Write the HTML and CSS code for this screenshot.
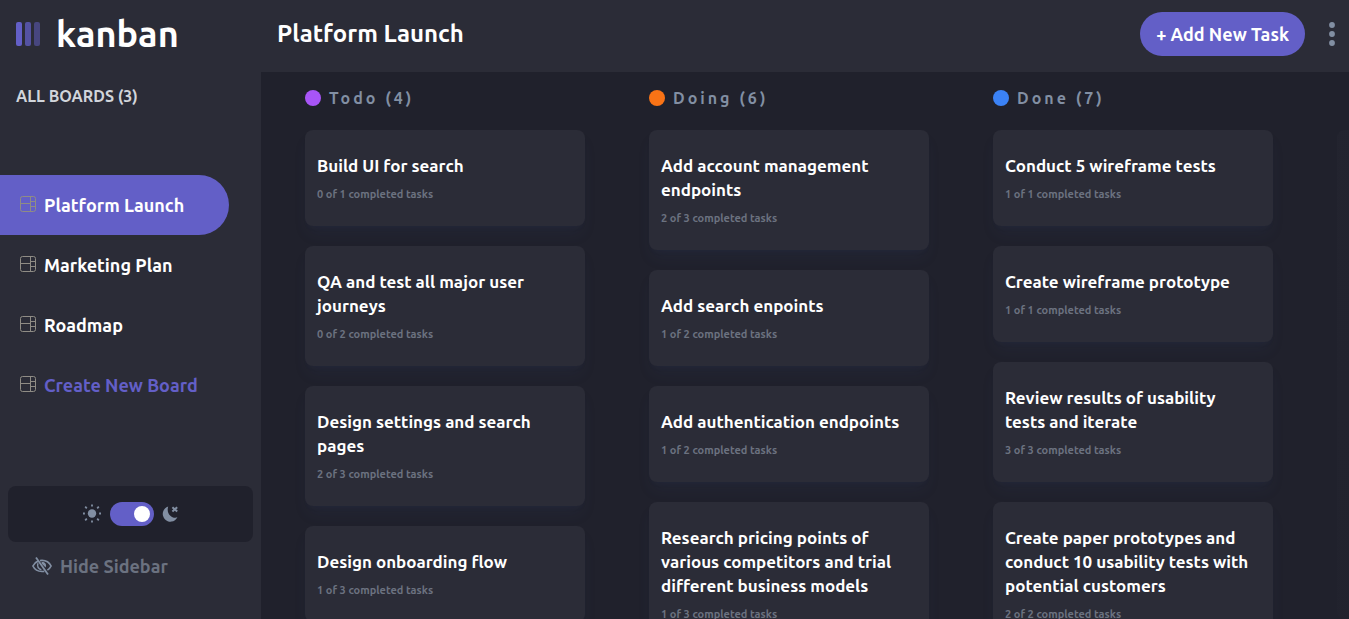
FILE: index.html
```html
<!DOCTYPE html>
<html lang="en">
<head>
<meta charset="utf-8">
<meta name="viewport" content="width=device-width, initial-scale=1">
<title>kanban</title>
<link rel="stylesheet" href="styles.css">
</head>
<body>
<svg class="sprite" aria-hidden="true">
  <symbol id="board" viewBox="0 0 16 16">
    <rect x="0.5" y="0.5" width="15" height="15" rx="2"/>
    <path d="M10.500 .5v15M.5 7.500h10M10.500 5.500h5M10.500 10.500h5"/>
  </symbol>
</svg>
<div class="app">
  <aside class="sidebar">
    <div class="logo">
      <svg class="logo-mark" width="24" height="24" viewBox="0 0 24 24" fill="#635fc7" aria-hidden="true">
        <rect width="6" height="24" rx="2"/>
        <rect x="9" width="6" height="24" rx="2" opacity=".75"/>
        <rect x="18" width="6" height="24" rx="2" opacity=".5"/>
      </svg>
      <span class="logo-name">kanban</span>
    </div>
    <h2 class="boards-title">ALL BOARDS (3)</h2>
    <nav class="boards">
      <button class="board active"><svg class="board-icon"><use href="#board"/></svg>Platform Launch</button>
      <button class="board"><svg class="board-icon"><use href="#board"/></svg>Marketing Plan</button>
      <button class="board"><svg class="board-icon"><use href="#board"/></svg>Roadmap</button>
      <button class="board create"><svg class="board-icon"><use href="#board"/></svg>Create New Board</button>
    </nav>
    <div class="sidebar-foot">
      <div class="theme">
        <svg width="20" height="20" viewBox="0 0 20 20" aria-hidden="true">
          <circle cx="10" cy="9.500" r="4.200" fill="#828fa3"/>
          <path d="M10 .5v1.900M10 16.600v1.900M1 9.500h1.900M17.100 9.500H19M3.200 2.700l1.600 1.600M15.200 14.700l1.600 1.600M16.800 2.700l-1.600 1.600M4.800 14.700l-1.600 1.600" stroke="#828fa3" stroke-width="1.800"/>
        </svg>
        <input class="switch" type="checkbox" role="switch" aria-label="Dark mode" checked>
        <svg width="18" height="16" viewBox="0 0 18 16" aria-hidden="true">
          <path d="M6.200 .6A7.700 7.700 0 1 0 15.400 11.300C10.500 13.200 3.800 8 6.200 .6z" fill="#828fa3"/>
          <path d="M10.400 1.200l4.800 4.300M15.200 1.200l-4.800 4.300" stroke="#828fa3" stroke-width="2"/>
        </svg>
      </div>
      <button class="hide">
        <svg width="20" height="18" viewBox="0 0 20 18" fill="none" stroke="#828fa3" aria-hidden="true">
          <path d="M6 4.100C3.800 5 2 6.700 .9 9c1.700 3.500 5.100 5.500 9.100 5.500.8 0 1.600-.1 2.300-.2M8 3.600c.6-.1 1.300-.2 2-.2 4 0 7.400 2.100 9.100 5.600-.8 1.700-2.100 3.100-3.700 4.100" stroke-width="1.700"/>
          <path d="M4 .6l12 16.800" stroke-width="1.800"/>
          <path d="M6 6.200c-1.300 3 .4 6 3.400 6.500" stroke-width="1.500"/>
          <path d="M9.500 5.200c3.500-.7 5.400 2.300 4.200 5.200L9.800 6.800z" fill="#828fa3" stroke="none"/>
        </svg>
        Hide Sidebar
      </button>
    </div>
  </aside>
  <div class="main">
    <header class="header">
      <h1 class="title">Platform Launch</h1>
      <button class="add">+ Add New Task</button>
      <button class="more" aria-label="Board menu">
        <svg width="6" height="24" viewBox="0 0 6 24" fill="#828fa3"><circle cx="3" cy="3" r="2.900"/><circle cx="3" cy="12" r="2.900"/><circle cx="3" cy="21" r="2.900"/></svg>
      </button>
    </header>
    <main class="columns">
      <section class="column">
        <h2 class="column-title todo">Todo (4)</h2>
        <article class="card"><h3>Build UI for search</h3><p>0 of 1 completed tasks</p></article>
        <article class="card"><h3>QA and test all major user journeys</h3><p>0 of 2 completed tasks</p></article>
        <article class="card"><h3>Design settings and search pages</h3><p>2 of 3 completed tasks</p></article>
        <article class="card"><h3>Design onboarding flow</h3><p>1 of 3 completed tasks</p></article>
      </section>
      <section class="column">
        <h2 class="column-title doing">Doing (6)</h2>
        <article class="card"><h3>Add account management endpoints</h3><p>2 of 3 completed tasks</p></article>
        <article class="card"><h3>Add search enpoints</h3><p>1 of 2 completed tasks</p></article>
        <article class="card"><h3>Add authentication endpoints</h3><p>1 of 2 completed tasks</p></article>
        <article class="card"><h3>Research pricing points of various competitors and trial different business models</h3><p>1 of 3 completed tasks</p></article>
      </section>
      <section class="column">
        <h2 class="column-title done">Done (7)</h2>
        <article class="card"><h3>Conduct 5 wireframe tests</h3><p>1 of 1 completed tasks</p></article>
        <article class="card"><h3>Create wireframe prototype</h3><p>1 of 1 completed tasks</p></article>
        <article class="card"><h3>Review results of usability tests and iterate</h3><p>3 of 3 completed tasks</p></article>
        <article class="card"><h3>Create paper prototypes and conduct 10 usability tests with potential customers</h3><p>2 of 2 completed tasks</p></article>
      </section>
      <button class="new-column" aria-label="New column"></button>
    </main>
  </div>
</div>
</body>
</html>
```
FILE: styles.css
```css
* { box-sizing: border-box; margin: 0; }

body {
  background: #20212c;
  color: #fff;
  font-family: Ubuntu, "Noto Sans", "Open Sans", sans-serif;
  font-size: 16px;
  font-weight: 700;
  line-height: 24px;
}

button {
  border: 0;
  padding: 0;
  background: none;
  color: inherit;
  font: inherit;
  cursor: pointer;
}

.sprite { display: none; }

.app { display: flex; height: 100vh; overflow: hidden; }

.sidebar {
  flex: 0 0 261px;
  display: flex;
  flex-direction: column;
  background: #2b2c37;
}

.logo { display: flex; align-items: center; gap: 16px; height: 68px; padding: 0 16px; }
.logo-name { font-size: 36px; line-height: 40px; }

.boards-title {
  margin-top: 16px;
  padding: 0 16px;
  color: #d1d5db;
  font-size: 16px;
}

.boards { display: flex; flex-direction: column; margin-top: 67px; padding-right: 32px; }

.board {
  display: flex;
  align-items: center;
  gap: 8px;
  height: 60px;
  padding-left: 20px;
  border-radius: 0 30px 30px 0;
  font-size: 18px;
}
.board.active { background: #635fc7; }
.board.create { color: #635fc7; }
.board-icon { width: 16px; height: 16px; margin-bottom: 2px; fill: none; stroke: #8f8c85; }

.sidebar-foot { margin-top: auto; padding: 0 8px 41px; }

.theme {
  display: flex;
  align-items: center;
  justify-content: center;
  gap: 8px;
  height: 56px;
  border-radius: 8px;
  background: #20212c;
}

.switch {
  appearance: none;
  width: 44px;
  height: 24px;
  margin: 0;
  padding: 4px;
  border-radius: 12px;
  background: #635fc7;
  cursor: pointer;
}
.switch::before {
  content: "";
  display: block;
  width: 16px;
  height: 16px;
  border-radius: 50%;
  background: #fff;
}
.switch:checked::before { margin-left: auto; margin-right: 0; }

.hide {
  display: flex;
  align-items: center;
  gap: 8px;
  margin-top: 12px;
  padding-left: 24px;
  color: #6b7280;
  font-size: 18px;
}

.main { flex: 1; min-width: 0; display: flex; flex-direction: column; }

.header {
  display: flex;
  align-items: center;
  height: 72px;
  flex-shrink: 0;
  padding: 0 14px 4px 16px;
  background: #2b2c37;
}
.title { flex: 1; font-size: 24px; line-height: 32px; }
.add {
  height: 44px;
  padding: 0 16px;
  border-radius: 22px;
  background: #635fc7;
  font-size: 18px;
}
.more { display: flex; margin-left: 24px; }

.columns {
  flex: 1;
  display: flex;
  gap: 64px;
  padding: 14px 0 0 44px;
  overflow: hidden;
}

.column { flex: 0 0 280px; display: flex; flex-direction: column; gap: 20px; }

.column-title {
  display: flex;
  align-items: center;
  gap: 8px;
  color: #828fa3;
  font-size: 16px;
  letter-spacing: 3px;
}
.column-title::before {
  content: "";
  width: 16px;
  height: 16px;
  border-radius: 50%;
  background: var(--dot);
}
.todo { --dot: #a855f7; }
.doing { --dot: #f97316; }
.done { --dot: #3b82f6; }

.card {
  flex-shrink: 0;
  padding: 24px 20px 24px 12px;
  border-radius: 8px;
  background: #2b2c37;
  box-shadow: 0 10px 15px -3px rgba(54, 78, 126, 0.1), 0 4px 6px -4px rgba(54, 78, 126, 0.1);
}
.card h3 { font-size: 17px; line-height: 24px; }
.card p { margin-top: 8px; color: #6b7280; font-size: 11px; line-height: 16px; }

.new-column {
  flex: 0 0 280px;
  margin-top: 44px;
  border-radius: 8px;
  background: linear-gradient(#2b2c3740, #2b2c3720);
}
```
